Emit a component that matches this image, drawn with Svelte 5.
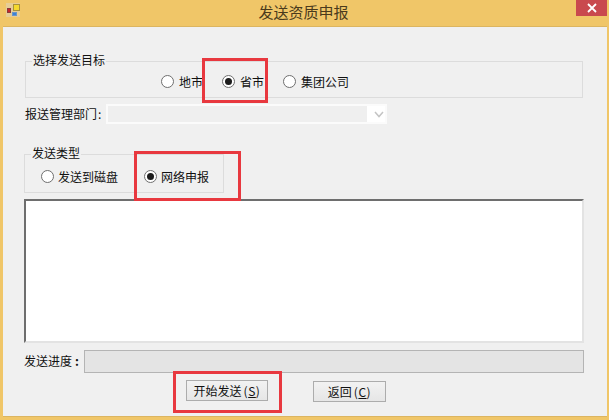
<script>
  let target = $state('province');
  let sendType = $state('network');
  const targets = [
    { id: 'city', label: '地市' },
    { id: 'province', label: '省市' },
    { id: 'group', label: '集团公司' }
  ];
  const types = [
    { id: 'disk', label: '发送到磁盘' },
    { id: 'network', label: '网络申报' }
  ];
</script>

<div class="window">
  <header class="titlebar">
    <svg class="app-icon" width="14" height="14" viewBox="0 0 14 14">
      <rect width="14" height="14" fill="#e6cd96" />
      <rect x="7.5" y="1.5" width="6" height="6" fill="#f5d92e" stroke="#a8923c" />
      <rect x="1.5" y="5.5" width="3" height="4" fill="#c8242a" stroke="#8a3a3a" />
      <rect x="6.5" y="9.5" width="4" height="3" fill="#3b82d6" stroke="#6a94c8" />
    </svg>
    <span class="title">发送资质申报</span>
    <button class="close" aria-label="关闭">
      <svg width="10" height="10" viewBox="0 0 10 10">
        <path d="M1 1 9 9M9 1 1 9" stroke="#fff" stroke-width="1.8" />
      </svg>
    </button>
  </header>

  <main class="body">
    <fieldset class="group target">
      <legend>选择发送目标</legend>
      <div class="options">
        {#each targets as t}
          <label class="radio">
            <input type="radio" bind:group={target} value={t.id} />
            <span class="dot"></span>
            {t.label}
          </label>
        {/each}
      </div>
    </fieldset>

    <div class="dept">
      <span class="dept-label">报送管理部门<span class="colon">:</span></span>
      <div class="combo">
        <div class="combo-value"></div>
        <svg class="chevron" width="10" height="7" viewBox="0 0 10 7">
          <path d="M1 1 5 5.5 9 1" fill="none" stroke="#c4c4c4" stroke-width="1.5" />
        </svg>
      </div>
    </div>

    <fieldset class="group type">
      <legend>发送类型</legend>
      <div class="options">
        {#each types as t}
          <label class="radio">
            <input type="radio" bind:group={sendType} value={t.id} />
            <span class="dot"></span>
            {t.label}
          </label>
        {/each}
      </div>
    </fieldset>

    <div class="log"></div>

    <div class="progress-row">
      <span class="progress-label">发送进度<span class="colon bold">:</span></span>
      <div class="progress"></div>
    </div>

    <div class="actions">
      <button class="btn start">开始发送<span class="key">(<u>S</u>)</span></button>
      <button class="btn back">返回<span class="key">(<u>C</u>)</span></button>
    </div>

    <div class="mark mark-province"></div>
    <div class="mark mark-network"></div>
    <div class="mark mark-start"></div>
  </main>
</div>

<style>
  :global(body) {
    margin: 0;
    background: #f0c668;
  }

  .window {
    width: 609px;
    height: 420px;
    display: flex;
    flex-direction: column;
    background: #f0c668;
    font-family: "Noto Sans CJK SC", "Liberation Sans", sans-serif;
    font-size: 12px;
    color: #111;
    overflow: hidden;
  }

  .titlebar {
    position: relative;
    height: 25px;
    flex: none;
    display: flex;
    align-items: center;
    justify-content: center;
  }

  .app-icon {
    position: absolute;
    left: 6px;
    top: 3px;
  }

  .title {
    font-size: 15px;
    color: #4a3a1c;
    position: relative;
    left: -1px;
    top: -1px;
  }

  .close {
    position: absolute;
    right: 2px;
    top: 0;
    width: 31px;
    height: 16px;
    padding: 0;
    border: none;
    background: #c9494e;
    display: flex;
    align-items: center;
    justify-content: center;
  }

  .body {
    position: relative;
    flex: none;
    height: 391px;
    box-sizing: border-box;
    margin: 1px 2px 0 3px;
    padding: 0 20px 0 21px;
    background: #f0f0f0;
    border-top: 1px solid #dcb560;
    border-bottom: 1px solid #dcb560;
  }

  .group {
    margin: 0;
    padding: 0;
    border: 1px solid #dcdcdc;
    box-sizing: border-box;
  }

  legend {
    padding: 0 1px 2px;
    margin-left: 6px;
    line-height: 12px;
    font-size: 12px;
  }

  .options {
    display: flex;
    align-items: center;
    height: 100%;
    box-sizing: border-box;
  }

  .target {
    margin-top: 27px;
    margin-left: 1px;
    width: 558px;
    height: 44px;
  }

  .target .options {
    padding: 0 0 2px 135px;
  }

  .target .radio:nth-of-type(1) {
    width: 61px;
  }

  .target .radio:nth-of-type(2) {
    width: 61px;
  }

  .type {
    margin-top: 23px;
    width: 200px;
    height: 46px;
  }

  .type .options {
    padding-left: 16px;
  }

  .type .radio {
    gap: 4px;
  }

  .type .radio:nth-of-type(1) {
    width: 103px;
  }

  .radio {
    display: flex;
    align-items: center;
    gap: 5px;
    line-height: 14px;
    white-space: nowrap;
  }

  .radio input {
    position: absolute;
    opacity: 0;
    width: 0;
    height: 0;
  }

  .dot {
    width: 11px;
    height: 11px;
    border: 1px solid #6f6f6f;
    border-radius: 50%;
    background: #fff;
    display: flex;
    align-items: center;
    justify-content: center;
    flex: none;
  }

  .radio input:checked + .dot::after {
    content: "";
    width: 7px;
    height: 7px;
    border-radius: 50%;
    background: #1c1c1c;
  }

  .dept {
    display: flex;
    align-items: center;
    height: 20px;
    margin-top: 6px;
    margin-left: 1px;
  }

  .dept-label {
    width: 81px;
    flex: none;
    padding-bottom: 2px;
  }

  .colon {
    margin-left: 1px;
  }

  .colon.bold {
    margin-left: 3px;
    font-weight: 700;
  }

  .combo {
    width: 281px;
    height: 20px;
    box-sizing: border-box;
    border: 2px solid #fbfbfb;
    background: #fff;
    display: flex;
    align-items: center;
  }

  .combo-value {
    width: 259px;
    height: 100%;
    background: #efefef;
  }

  .chevron {
    margin-left: 7px;
  }

  .log {
    width: 560px;
    height: 144px;
    box-sizing: border-box;
    background: #fff;
    border: 2px solid;
    border-color: #6e6e6e #e3e3e3 #e3e3e3 #6e6e6e;
    margin-top: 6px;
  }

  .progress-row {
    display: flex;
    align-items: center;
    margin-top: 7px;
    height: 23px;
  }

  .progress-label {
    width: 60px;
    flex: none;
    padding-bottom: 2px;
  }

  .progress {
    width: 500px;
    height: 23px;
    box-sizing: border-box;
    background: #e4e4e4;
    border: 1px solid #b4b4b4;
  }

  .actions {
    display: flex;
    align-items: flex-start;
    margin-top: 7px;
    padding-left: 162px;
    gap: 45px;
  }

  .btn {
    height: 21px;
    padding: 0;
    font: inherit;
    color: #111;
    background: linear-gradient(#f2f2f2, #e6e6e6);
    border: 1px solid #acacac;
    line-height: 17px;
  }

  .key {
    letter-spacing: 0.5px;
    margin-left: 2px;
  }

  .start {
    width: 82px;
  }

  .back {
    width: 73px;
    margin-top: 1px;
  }

  .mark {
    position: absolute;
    box-sizing: border-box;
    border: 3px solid #e8383f;
    pointer-events: none;
  }

  .mark-province {
    left: 199px;
    top: 31px;
    width: 66px;
    height: 45px;
  }

  .mark-network {
    left: 131px;
    top: 124px;
    width: 107px;
    height: 50px;
  }

  .mark-start {
    left: 170px;
    top: 344px;
    width: 109px;
    height: 42px;
  }
</style>
